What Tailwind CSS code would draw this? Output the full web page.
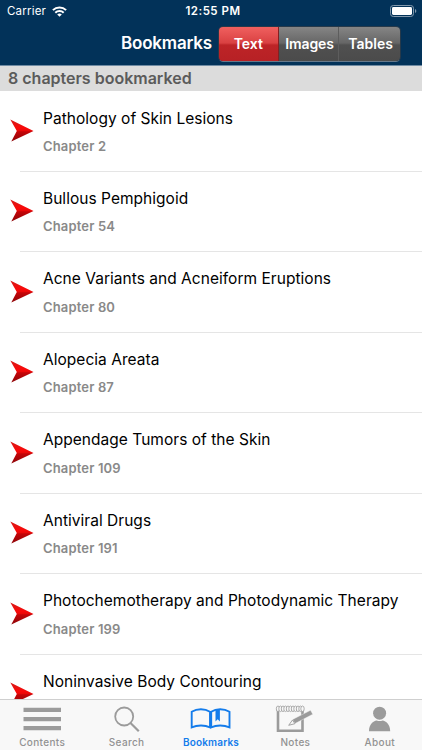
<!DOCTYPE html>
<html lang="en">
<head>
<meta charset="utf-8">
<title>Bookmarks</title>
<script src="https://cdn.jsdelivr.net/npm/@tailwindcss/browser@4"></script>
</head>
<body class="w-[422px] h-[750px] overflow-hidden bg-white font-['Inter','Liberation_Sans',sans-serif]">
<div class="flex flex-col w-[422px] h-[750px] overflow-hidden">
  <header class="h-[66px] shrink-0 bg-[#023259] text-white border-b border-[#6f8ba3]">
    <div class="grid grid-cols-3 h-[22px] items-center pl-[7px] pr-[5px]">
      <div class="flex items-center gap-[6px] text-[11.5px] tracking-[0.2px]">
        <span class="pt-[2px]">Carrier</span>
        <svg width="15" height="11" viewBox="0 0 15 11" fill="none" stroke="#fff" stroke-width="2"><path d="M.9 4.1a9.4 9.4 0 0 1 13.2 0M3.3 6.7a6 6 0 0 1 8.4 0"/><path d="M7.5 10.8 5.2 8.5a3.3 3.3 0 0 1 4.6 0z" fill="#fff" stroke="none"/></svg>
      </div>
      <div class="pt-[2px] pl-[2px] text-center text-[11.5px] font-semibold tracking-[0.5px] whitespace-nowrap">12:55 PM</div>
      <div class="flex justify-end">
        <svg width="27" height="12" viewBox="0 0 27 12"><rect x=".5" y=".5" width="23" height="11" rx="2.8" fill="none" stroke="#8299ad"/><rect x="2" y="2" width="20" height="8" rx="1.4" fill="#fff"/><path d="M25 4v4c1.8-.8 1.8-3.200 0-4z" fill="#8299ad"/></svg>
      </div>
    </div>
    <div class="flex items-center h-[43px] pl-[121px]">
      <h1 class="w-[97px] text-[17px] font-semibold whitespace-nowrap tracking-[-0.2px]">Bookmarks</h1>
      <div class="flex w-[183px] h-[36px] rounded-[5px] overflow-hidden border border-[#26394a] border-b-[#66798b] text-[14px] font-semibold text-center leading-[34px]">
        <div class="w-[60px] bg-[linear-gradient(#f0605f_0%,#d94142_47%,#bd2427_53%,#b72125_100%)] border-r border-[#842022]">Text</div>
        <div class="w-[61px] pl-[2px] tracking-[-0.1px] bg-[linear-gradient(#858585_0%,#666_47%,#505050_53%,#4b4b4b_100%)] border-r border-[#5d5d5d]">Images</div>
        <div class="w-[61px] pl-[2px] bg-[linear-gradient(#858585_0%,#666_47%,#505050_53%,#4b4b4b_100%)]">Tables</div>
      </div>
    </div>
  </header>
  <div class="h-[25px] shrink-0 bg-[#dcdcdc] pl-[8px] text-[16px] leading-[25px] font-semibold text-[#5b5b5b]">8 chapters bookmarked</div>

  <svg class="absolute w-0 h-0">
    <defs>
      <linearGradient id="red" x1="0" y1="0" x2="0" y2="1"><stop offset="0" stop-color="#d51b18"/><stop offset=".4" stop-color="#fa0808"/><stop offset=".5" stop-color="#ec0808"/><stop offset=".56" stop-color="#c50508"/><stop offset="1" stop-color="#8c0508"/></linearGradient>
    </defs>
  </svg>
  <main id="list" class="flex-1 min-h-0 overflow-hidden bg-white"></main>

  <nav class="grid grid-cols-5 h-[51px] shrink-0 bg-[#f8f8f8] border-t border-[#cfcfcf] text-[10px] font-medium text-[#929292] text-center tracking-[0.35px]">
    <div class="flex flex-col items-center"><svg width="84" height="36" viewBox="0 0 84 36" fill="#9b9b9b"><path d="M23.500 7.800h37.500v4.300h-37.500zM23.500 17h37.500v4.200h-37.500zM23.500 26h37.500v4.200h-37.500z"/></svg><span class="leading-[13px]">Contents</span></div>
    <div class="flex flex-col items-center"><svg width="84" height="36" viewBox="0 0 84 36" fill="none" stroke="#9b9b9b" stroke-width="1.8"><circle cx="39.200" cy="16.500" r="9"/><path d="M45.500 23l8.300 8.200" stroke-width="2.200"/></svg><span class="leading-[13px]">Search</span></div>
    <div class="flex flex-col items-center text-[#147ceb] font-semibold tracking-[0.15px]"><svg width="84" height="36" viewBox="0 0 84 36" fill="none" stroke="#147ceb" stroke-width="1.900"><path d="M22.700 11.800c5.500-3.400 13-3.400 18.300 0v15.500c-5.100-2.500-12.800-2.500-18.300 0zM42.200 11.800c5.100-3.400 12.800-3.400 18.300 0v15.500c-5.500-2.500-13.200-2.500-18.300 0z"/><path d="M46.500 9.800v11.700l2.200-2.200 2.200 2.200V9.300z" fill="#147ceb" stroke="none"/></svg><span class="leading-[13px]">Bookmarks</span></div>
    <div class="flex flex-col items-center"><svg width="84" height="36" viewBox="0 0 84 36" fill="none" stroke="#9b9b9b"><path d="M25 9v21.800h24.500V9" stroke-width="2.600"/><g stroke-width=".8" fill="#f8f8f8"><ellipse cx="25" cy="8.800" rx="1.700" ry="2.800"/><ellipse cx="27.500" cy="8.800" rx="1.700" ry="2.800"/><ellipse cx="30" cy="8.800" rx="1.700" ry="2.800"/><ellipse cx="32.500" cy="8.800" rx="1.700" ry="2.800"/><ellipse cx="35" cy="8.800" rx="1.700" ry="2.800"/><ellipse cx="37.500" cy="8.800" rx="1.700" ry="2.800"/><ellipse cx="40" cy="8.800" rx="1.700" ry="2.800"/><ellipse cx="42.500" cy="8.800" rx="1.700" ry="2.800"/><ellipse cx="45" cy="8.800" rx="1.700" ry="2.800"/><ellipse cx="47.500" cy="8.800" rx="1.700" ry="2.800"/><ellipse cx="49.500" cy="8.800" rx="1.700" ry="2.800"/></g><path d="M39.500 19.500 57.500 10.300l2.300 3.900L42 23.600z" fill="#9b9b9b" stroke="#f8f8f8" stroke-width=".4"/><path d="M39.500 20l-3.800 5.300 6.200-1.600z" fill="#f8f8f8" stroke-width=".9"/></svg><span class="leading-[13px]">Notes</span></div>
    <div class="flex flex-col items-center"><svg width="84" height="36" viewBox="0 0 84 36" fill="#9b9b9b"><circle cx="41.600" cy="13.200" r="6.500"/><path d="M31 31.300c0-7 4.200-10.300 7.700-10.800q2.900 1.200 5.800 0c3.500.5 7.700 3.800 7.700 10.800z"/></svg><span class="leading-[13px]">About</span></div>
  </nav>
</div>
<script>
const chapters = [
  ["Pathology of Skin Lesions", 2],
  ["Bullous Pemphigoid", 54],
  ["Acne Variants and Acneiform Eruptions", 80],
  ["Alopecia Areata", 87],
  ["Appendage Tumors of the Skin", 109],
  ["Antiviral Drugs", 191],
  ["Photochemotherapy and Photodynamic Therapy", 199],
  ["Noninvasive Body Contouring", null]
];
document.getElementById("list").innerHTML = chapters.map(([title, n]) => `
  <div class="flex h-[80.430px] pl-[10px]">
    <svg class="shrink-0 mt-[27px]" width="24" height="24" viewBox="0 0 24 24"><path d="M.3 1.500 23.500 13 1.300 23.500 6.800 13z" fill="url(#red)"/></svg>
    <div class="relative flex-1 pl-[9px] pt-[16.600px] whitespace-nowrap">
      <div class="text-[15.500px] leading-[22px] text-black tracking-[0.030px]">${title}</div>
      ${n ? `<div class="mt-[7.400px] text-[13px] leading-[18px] font-semibold text-[#898989] tracking-[0.150px]">Chapter ${n}</div>
      <div class="absolute left-[-14px] right-0 bottom-[-0.600px] h-px bg-[#e5e5e5]"></div>` : ""}
    </div>
  </div>`).join("");
</script>
</body>
</html>
